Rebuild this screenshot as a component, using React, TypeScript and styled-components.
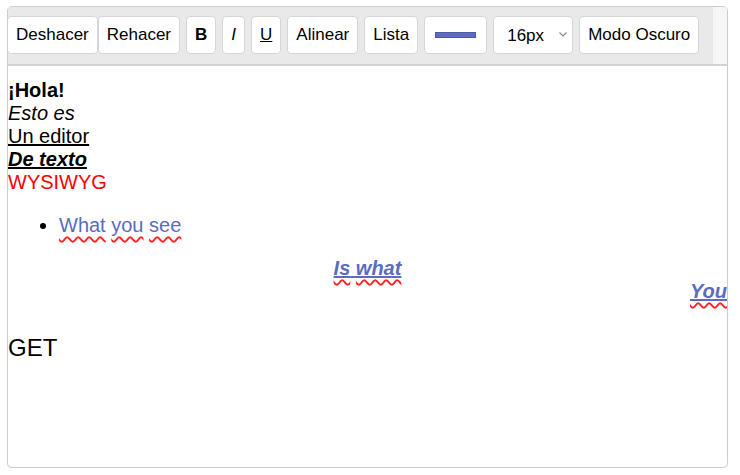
import React, { useState } from "react";
import styled, { createGlobalStyle } from "styled-components";

const COLORS = {
  border: "#cccccc",
  toolbar: "#e9e9e9",
  toolbarEdge: "#f6f6f6",
  buttonBorder: "#d6d6d6",
  accent: "#5c6bc0",
  red: "#ff0000",
  spell: "#f22",
};

const GlobalStyle = createGlobalStyle`
  body {
    margin: 0;
    background: #fff;
    font-family: "Liberation Sans", Arial, sans-serif;
  }
`;

const Page = styled.div`
  padding: 6px 0 0 7px;
`;

const EditorShell = styled.div<{ $dark: boolean }>`
  width: 721px;
  height: 462px;
  box-sizing: border-box;
  display: flex;
  flex-direction: column;
  border: 1px solid ${COLORS.border};
  border-radius: 5px;
  overflow: hidden;
  background: ${(p) => (p.$dark ? "#1e1e1e" : "#fff")};
  box-shadow: 0 1px 1px rgba(0, 0, 0, 0.08);
`;

const Toolbar = styled.div`
  display: flex;
  align-items: center;
  gap: 6px;
  padding: 9px 0 10px;
  background: ${COLORS.toolbar};
  border-bottom: 2px solid #d2d2d2;
  box-shadow: inset -14px 0 0 ${COLORS.toolbarEdge};
`;

const UndoGroup = styled.div`
  display: flex;
  margin-left: -1px;
`;

type Format = "bold" | "italic" | "underline";

const ToolButton = styled.button<{ $format?: Format }>`
  flex: none;
  height: 38px;
  padding: 0 8px;
  border: 1px solid ${COLORS.buttonBorder};
  border-radius: 4px;
  background: #fff;
  color: #000;
  font-family: inherit;
  font-size: 17px;
  font-weight: ${(p) => (p.$format === "bold" ? 700 : 400)};
  font-style: ${(p) => (p.$format === "italic" ? "italic" : "normal")};
  text-decoration: ${(p) => (p.$format === "underline" ? "underline" : "none")};
  cursor: pointer;
`;

const ColorButton = styled.button`
  flex: none;
  width: 63px;
  height: 38px;
  display: flex;
  align-items: center;
  justify-content: center;
  padding: 0;
  border: 1px solid ${COLORS.buttonBorder};
  border-radius: 4px;
  background: #fff;
  cursor: pointer;
`;

const Swatch = styled.span<{ $color: string }>`
  width: 41px;
  height: 6px;
  box-sizing: border-box;
  background: ${(p) => p.$color};
  border: 1px solid rgba(0, 0, 0, 0.15);
`;

const SelectWrap = styled.div`
  position: relative;
  flex: none;
  display: flex;
`;

const SizeSelect = styled.select`
  appearance: none;
  width: 80px;
  height: 38px;
  padding: 0 0 0 13px;
  border: 1px solid ${COLORS.buttonBorder};
  border-radius: 4px;
  background: #fff;
  color: #000;
  font-family: inherit;
  font-size: 17px;
  cursor: pointer;
`;

const Chevron = styled.svg`
  position: absolute;
  right: 6px;
  top: 16px;
  pointer-events: none;
`;

const Content = styled.div<{ $dark: boolean }>`
  flex: 1;
  padding: 13px 0 0;
  font-size: 20px;
  color: ${(p) => (p.$dark ? "#eee" : "#000")};
  outline: none;
`;

const Line = styled.div<{ $align?: "left" | "center" | "right" }>`
  text-align: ${(p) => p.$align ?? "left"};
`;

const Text = styled.span<{
  $bold?: boolean;
  $italic?: boolean;
  $underline?: boolean;
  $color?: string;
}>`
  font-weight: ${(p) => (p.$bold ? 700 : 400)};
  font-style: ${(p) => (p.$italic ? "italic" : "normal")};
  text-decoration: ${(p) => (p.$underline ? "underline" : "none")};
  color: ${(p) => p.$color ?? "inherit"};
`;

const Misspelled = styled.span`
  text-decoration: underline wavy ${COLORS.spell};
  text-decoration-thickness: 1.5px;
  text-decoration-skip-ink: none;
  text-underline-offset: 4px;
`;

const BulletList = styled.ul`
  margin: 20px 0;
  padding-left: 51px;
`;

const Heading = styled.div`
  margin-top: 31px;
  font-size: 24px;
`;

function Flagged({ words }: { words: string }) {
  const parts = words.split(" ");
  return (
    <>
      {parts.map((w, i) => (
        <React.Fragment key={i}>
          <Misspelled>{w}</Misspelled>
          {i < parts.length - 1 ? " " : null}
        </React.Fragment>
      ))}
    </>
  );
}

export default function App() {
  const [dark, setDark] = useState(false);
  const [size, setSize] = useState("16px");

  function exec(cmd: string, value?: string) {
    document.execCommand(cmd, false, value);
  }

  return (
    <React.Fragment>
      <GlobalStyle />
      <Page>
        <EditorShell $dark={dark}>
          <Toolbar>
            <UndoGroup>
              <ToolButton onClick={() => exec("undo")}>Deshacer</ToolButton>
              <ToolButton onClick={() => exec("redo")}>Rehacer</ToolButton>
            </UndoGroup>
            <ToolButton $format="bold" onClick={() => exec("bold")}>
              B
            </ToolButton>
            <ToolButton $format="italic" onClick={() => exec("italic")}>
              I
            </ToolButton>
            <ToolButton $format="underline" onClick={() => exec("underline")}>
              U
            </ToolButton>
            <ToolButton onClick={() => exec("justifyCenter")}>Alinear</ToolButton>
            <ToolButton onClick={() => exec("insertUnorderedList")}>Lista</ToolButton>
            <ColorButton onClick={() => exec("foreColor", COLORS.accent)}>
              <Swatch $color={COLORS.accent} />
            </ColorButton>
            <SelectWrap>
              <SizeSelect value={size} onChange={(e) => setSize(e.target.value)}>
                <option>12px</option>
                <option>14px</option>
                <option>16px</option>
                <option>20px</option>
                <option>24px</option>
              </SizeSelect>
              <Chevron width="8" height="5" viewBox="0 0 8 5">
                <path d="M0.5 0.5 L4 4 L7.5 0.5" fill="none" stroke="#888" strokeWidth="1.2" />
              </Chevron>
            </SelectWrap>
            <ToolButton onClick={() => setDark(!dark)}>Modo Oscuro</ToolButton>
          </Toolbar>
          <Content
            $dark={dark}
            contentEditable
            suppressContentEditableWarning
            spellCheck={false}
          >
            <Line>
              <Text $bold>¡Hola!</Text>
            </Line>
            <Line>
              <Text $italic>Esto es</Text>
            </Line>
            <Line>
              <Text $underline>Un editor</Text>
            </Line>
            <Line>
              <Text $bold $italic $underline>
                De texto
              </Text>
            </Line>
            <Line>
              <Text $color={COLORS.red}>WYSIWYG</Text>
            </Line>
            <BulletList>
              <li>
                <Text $color={COLORS.accent}>
                  <Flagged words="What you see" />
                </Text>
              </li>
            </BulletList>
            <Line $align="center">
              <Text $bold $italic $underline $color={COLORS.accent}>
                <Flagged words="Is what" />
              </Text>
            </Line>
            <Line $align="right">
              <Text $bold $italic $underline $color={COLORS.accent}>
                <Flagged words="You" />
              </Text>
            </Line>
            <Heading>GET</Heading>
          </Content>
        </EditorShell>
      </Page>
    </React.Fragment>
  );
}
